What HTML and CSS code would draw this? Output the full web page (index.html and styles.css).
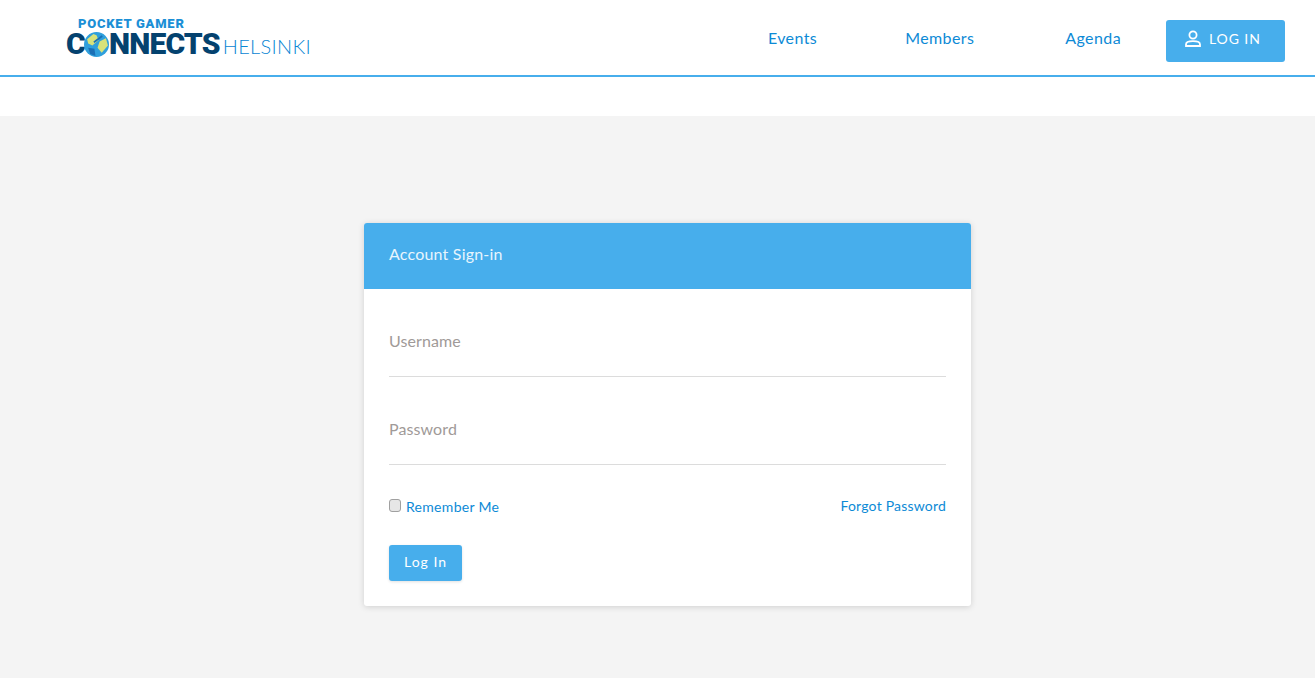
FILE: index.html
```html
<!doctype html>
<html lang="en">
<head>
	<meta charset="UTF-8">
	<title>Account Sign-in</title>
	<link rel="stylesheet" href="styles.css">
</head>
<body>
	<header class="topbar">
		<a class="logo" href="#">
			<span class="logo-top">POCKET GAMER</span>
			<span class="logo-main">
				<span class="logo-word">C</span>
				<svg class="logo-globe" viewBox="0 0 24 24" width="25" height="25">
					<circle cx="12" cy="12" r="12" fill="#2f9fdc"/>
					<path d="M3 7 L9 2 L12 3 L14 8 L8 13 L4 11 Z" fill="#d8e27a"/>
					<path d="M15 9 L21 6 L23 13 L17 20 L13 15 Z" fill="#d8e27a"/>
					<path d="M4 15 L10 16 L11 23 L6 21 Z" fill="#1a6fb5"/>
					<path d="M9 9 L17 3 L18 4.500 L10 10.500 Z" fill="#1a6fb5"/>
				</svg>
				<span class="logo-word">NNECTS</span>
				<span class="logo-city">HELSINKI</span>
			</span>
		</a>
		<nav class="nav">
			<a class="nav-link nav-events" href="#">Events</a>
			<a class="nav-link nav-members" href="#">Members</a>
			<a class="nav-link nav-agenda" href="#">Agenda</a>
			<a class="login-btn" href="#">
				<svg viewBox="0 0 18 18" width="18" height="18" fill="none" stroke="#fff" stroke-width="1.8">
					<circle cx="9" cy="5" r="3.6"/>
					<path d="M2 16 V14.5 C2 12.5 5 11.2 9 11.2 C13 11.2 16 12.5 16 14.500 V16 Z"/>
				</svg>
				<span>LOG IN</span>
			</a>
		</nav>
	</header>
	<main class="page">
		<form class="card">
			<div class="card-head">Account Sign-in</div>
			<div class="card-body">
				<input class="field" type="text" placeholder="Username">
				<input class="field" type="password" placeholder="Password">
				<div class="row">
					<label class="remember"><input type="checkbox"> Remember Me</label>
					<a class="forgot" href="#">Forgot Password</a>
				</div>
				<button class="submit" type="button">Log In</button>
			</div>
		</form>
	</main>
</body>
</html>
```
FILE: styles.css
```css
* {
	margin: 0;
	padding: 0;
	box-sizing: border-box;
}
html, body {
	height: 100%;
}
body {
	font-family: "Lato", "Open Sans", sans-serif;
	background: #fff;
	display: flex;
	flex-direction: column;
	overflow: hidden;
}
a {
	text-decoration: none;
	color: #0d8ad6;
}
.topbar {
	height: 77px;
	border-bottom: 2px solid #47aeec;
	display: flex;
	justify-content: space-between;
	align-items: flex-start;
	padding: 18px 30px 0 66px;
	margin-bottom: 39px;
	flex: none;
}
.logo {
	display: block;
	width: 246px;
}
.logo-top {
	display: block;
	font: 900 13px/12px "Roboto", sans-serif;
	color: #1b8fd6;
	margin-left: 12px;
	letter-spacing: 0.75px;
	white-space: nowrap;
}
.logo-main {
	display: flex;
	align-items: center;
	height: 28px;
}
.logo-word {
	font: 900 30px/28px "Roboto", sans-serif;
	color: #04426f;
	letter-spacing: -0.8px;
}
.logo-globe {
	flex: none;
	margin-left: -1px;
}
.logo-city {
	font: 300 20px/28px "Lato", sans-serif;
	color: #0a86d4;
	margin: 3px 0 0 3px;
	letter-spacing: 0.3px;
}
.nav {
	display: flex;
	align-items: flex-start;
}
.nav-link {
	font-size: 16px;
	line-height: 20px;
	margin-top: 10px;
	letter-spacing: 0.4px;
}
.nav-events {
	margin-right: 88px;
}
.nav-members {
	margin-right: 91px;
}
.nav-agenda {
	margin-right: 45px;
}
.login-btn {
	width: 119px;
	height: 42px;
	margin-top: 2px;
	padding: 0 0 5px 18px;
	background: #47aeec;
	border-radius: 3px;
	color: #fff;
	display: flex;
	align-items: center;
	gap: 7px;
	font-size: 14px;
	letter-spacing: 0.9px;
}
.page {
	flex: 1;
	background: #f4f4f4;
	display: flex;
	justify-content: center;
	align-items: flex-start;
	padding: 107px 0 0 20px;
}
.card {
	width: 607px;
	height: 383px;
	background: #fff;
	border-radius: 3px;
	box-shadow: 0 1px 6px rgba(0, 0, 0, 0.15);
	overflow: hidden;
}
.card-head {
	height: 66px;
	background: #47aeec;
	color: #e8f5fd;
	font-size: 16px;
	line-height: 62px;
	padding-left: 25px;
	letter-spacing: 0.2px;
}
.card-body {
	padding: 0 25px;
}
.field {
	display: block;
	width: 100%;
	height: 88px;
	padding-top: 15px;
	border: 0;
	border-bottom: 1px solid #dcdcdc;
	outline: 0;
	font-family: inherit;
	font-size: 16px;
	letter-spacing: 0.1px;
}
.field::placeholder {
	color: #a09a98;
	opacity: 1;
}
.row {
	display: flex;
	justify-content: space-between;
	align-items: center;
	margin-top: 32px;
	font-size: 14px;
	line-height: 20px;
}
.remember {
	color: #0d8ad6;
	display: flex;
	align-items: center;
	gap: 4px;
	letter-spacing: 0.3px;
}
.remember input {
	appearance: none;
	width: 12px;
	height: 13px;
	margin: -4px 1px 0 0;
	background: #e6e6e6;
	border: 1px solid #a0a0a0;
	border-radius: 3px;
}
.forgot {
	margin-top: -2px;
	letter-spacing: 0.2px;
}
.submit {
	display: block;
	margin-top: 28px;
	width: 73px;
	height: 36px;
	padding-bottom: 3px;
	background: #47aeec;
	color: #fff;
	border: 0;
	border-radius: 3px;
	box-shadow: 0 1px 3px rgba(0, 0, 0, 0.12);
	font-family: inherit;
	font-size: 14px;
	letter-spacing: 1px;
}
```
